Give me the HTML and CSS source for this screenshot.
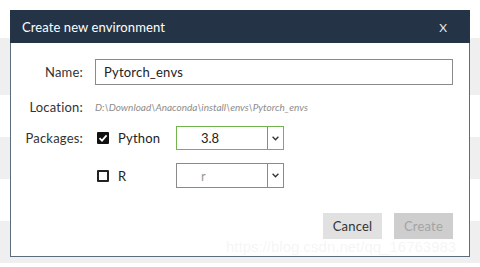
FILE: index.html
```html
<!DOCTYPE html>
<html lang="en">
<head>
  <meta charset="UTF-8" />
  <meta name="viewport" content="width=device-width, initial-scale=1" />
  <link rel="stylesheet" href="styles.css">
</head>
<body>

  <div class="dialog">
    <div class="dialog-header">
      <span class="dialog-title">Create new environment</span>
      <span class="dialog-close">X</span>
    </div>

    <div class="dialog-body">
      <div class="row row-name">
        <label class="row-label">Name:</label>
        <div class="text-input">Pytorch_envs</div>
      </div>

      <div class="row row-location">
        <span class="row-label">Location:</span>
        <span class="location-path">D:\Download\Anaconda\install\envs\Pytorch_envs</span>
      </div>

      <div class="row row-python">
        <span class="row-label">Packages:</span>
        <div class="package">
          <span class="checkbox checked">
            <svg width="12" height="12" viewBox="0 0 12 12"><polyline points="2.5,6.2 5,8.6 9.6,3.4" fill="none" stroke="#fff" stroke-width="1.8"/></svg>
          </span>
          <span class="package-name">Python</span>
        </div>
        <div class="select active">
          <span class="select-value">3.8</span>
          <span class="select-arrow">
            <svg width="7" height="5" viewBox="0 0 7 5"><polyline points="0.6,0.8 3.5,3.8 6.4,0.8" fill="none" stroke="#333" stroke-width="1.3"/></svg>
          </span>
        </div>
      </div>

      <div class="row row-r">
        <span class="row-label"></span>
        <div class="package">
          <span class="checkbox"></span>
          <span class="package-name">R</span>
        </div>
        <div class="select">
          <span class="select-value muted">r</span>
          <span class="select-arrow">
            <svg width="7" height="5" viewBox="0 0 7 5"><polyline points="0.6,0.8 3.5,3.8 6.4,0.8" fill="none" stroke="#333" stroke-width="1.3"/></svg>
          </span>
        </div>
      </div>

      <div class="dialog-footer">
        <button class="btn">Cancel</button>
        <button class="btn disabled">Create</button>
      </div>
    </div>
  </div>

  <div class="watermark">https://blog.csdn.net/qq_16763983</div>

</body>
</html>
```

FILE: styles.css
```css
body {
  margin: 0;
  padding: 10px 0 0 10px;
  width: 480px;
  height: 267px;
  box-sizing: border-box;
  overflow: hidden;
  font-family: Lato, 'Open Sans', sans-serif;
  color: #222;
  background: repeating-linear-gradient(to bottom, #efefef 0 42px, #ffffff 42px 84px);
  background-position: 0 53px;
  position: relative;
}

.dialog {
  width: 460px;
  height: 247px;
  box-sizing: border-box;
  border: 1px solid #5b6d7c;
  background: #fff;
  display: flex;
  flex-direction: column;
}

.dialog-header {
  height: 32px;
  background: #243446;
  color: #fff;
  display: flex;
  align-items: center;
  justify-content: space-between;
  padding: 0 23px 0 12px;
  margin: -1px -1px 0 -1px;
  padding-top: 1px;
}

.dialog-title {
  font-size: 13px;
  letter-spacing: 0.1px;
}

.dialog-close {
  font-size: 12px;
  color: #e4e8ee;
}

.dialog-body {
  display: flex;
  flex-direction: column;
  padding: 16px 16px 0 0;
}

.row {
  display: flex;
  align-items: center;
  font-size: 13px;
}

.row-label {
  width: 72px;
  text-align: right;
  margin-right: 12px;
  color: #333;
  letter-spacing: 0.2px;
}

.row-name { height: 26px; }
.row-location { height: 20px; margin-top: 12px; }
.row-python { height: 24px; margin-top: 9px; }
.row-r { height: 25px; margin-top: 13px; }

.text-input {
  flex: 1;
  height: 26px;
  box-sizing: border-box;
  border: 1px solid #8a8a8a;
  padding-left: 8px;
  display: flex;
  align-items: center;
  color: #222;
  letter-spacing: 0.2px;
}

.location-path {
  font-size: 10px;
  font-style: italic;
  color: #8c8c8c;
}

.package {
  width: 81px;
  display: flex;
  align-items: center;
}

.checkbox {
  width: 12px;
  height: 12px;
  box-sizing: border-box;
  margin-left: 2px;
  margin-right: 9px;
  border: 2px solid #222;
  border-radius: 1px;
  display: flex;
}

.checkbox.checked {
  background: #111;
  border-color: #111;
}

.checkbox.checked svg {
  margin: -2px;
}

.package-name {
  color: #222;
  letter-spacing: 0.2px;
}

.select {
  width: 108px;
  height: 100%;
  box-sizing: border-box;
  border: 1px solid #8a8a8a;
  display: flex;
}

.select.active {
  border-color: #72b550;
}

.select-value {
  flex: 1;
  padding-left: 24px;
  display: flex;
  align-items: center;
  color: #222;
}

.select-value.muted {
  color: #999;
}

.select-arrow {
  width: 15px;
  border-left: 1px solid #8a8a8a;
  display: flex;
  align-items: center;
  justify-content: center;
}

.dialog-footer {
  display: flex;
  justify-content: flex-end;
  gap: 12px;
  margin-top: 25px;
}

.btn {
  width: 59px;
  height: 26px;
  border: none;
  padding: 0;
  background: #e1e1e1;
  color: #333;
  font-family: Lato, 'Open Sans', sans-serif;
  font-size: 13px;
  letter-spacing: 0.2px;
}

.btn.disabled {
  background: #cecece;
  color: #a4a4a4;
}

.watermark {
  position: absolute;
  left: 226px;
  top: 238px;
  font-family: 'Liberation Sans', Arial, sans-serif;
  font-size: 15px;
  color: rgba(225, 225, 225, 0.32);
  white-space: nowrap;
}
```
